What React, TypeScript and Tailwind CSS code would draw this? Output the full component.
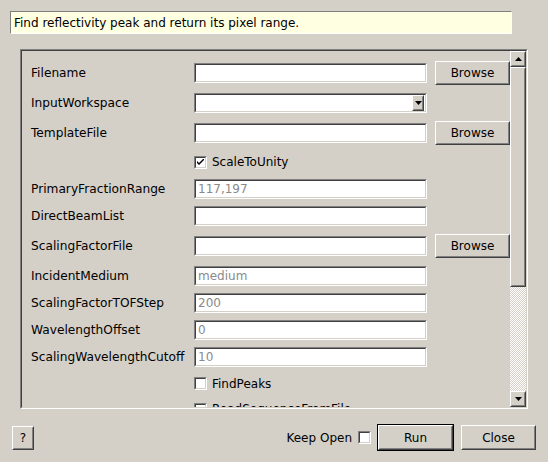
import React from "react";

const sunkenOuter =
  "border border-t-[#808080] border-l-[#808080] border-b-white border-r-white";
const sunkenInner =
  "border border-t-[#404040] border-l-[#404040] border-b-[#d4d0c8] border-r-[#d4d0c8]";
const raisedOuter =
  "border border-t-white border-l-white border-b-[#404040] border-r-[#404040]";
const raisedInner =
  "border border-t-[#d4d0c8] border-l-[#d4d0c8] border-b-[#808080] border-r-[#808080]";

function Input({ value }: { value?: string }) {
  return (
    <div className={`w-[233px] h-[20px] ${sunkenOuter}`}>
      <div
        className={`h-full ${sunkenInner} bg-white flex items-center pl-[2px] text-[#8a8a8a] leading-none`}
      >
        {value}
      </div>
    </div>
  );
}

function Tri({ down }: { down?: boolean }) {
  return (
    <svg width="7" height="4" viewBox="0 0 7 4">
      {down ? (
        <polygon points="0,0 7,0 3.5,4" fill="#000" />
      ) : (
        <polygon points="0,4 7,4 3.5,0" fill="#000" />
      )}
    </svg>
  );
}

function Combo() {
  return (
    <div className={`w-[233px] h-[20px] ${sunkenOuter}`}>
      <div className={`h-full ${sunkenInner} bg-white flex items-center justify-end`}>
        <div className={`w-[12px] h-[16px] mr-[1px] ${raisedOuter} bg-[#d4d0c8]`}>
          <div className={`h-full ${raisedInner} flex items-center justify-center`}>
            <Tri down />
          </div>
        </div>
      </div>
    </div>
  );
}

function Button({
  label,
  w,
  h,
  isDefault,
}: {
  label: string;
  w: string;
  h: string;
  isDefault?: boolean;
}) {
  const inner = (
    <div className={`h-full w-full ${raisedOuter}`}>
      <div className={`h-full w-full ${raisedInner} flex items-center justify-center`}>
        {label}
      </div>
    </div>
  );
  return (
    <div className={`${w} ${h} ${isDefault ? "border border-black" : ""} bg-[#d4d0c8] shrink-0`}>
      {inner}
    </div>
  );
}

function CheckBox({ checked }: { checked?: boolean }) {
  return (
    <div className={`w-[13px] h-[13px] ${sunkenOuter} shrink-0`}>
      <div className={`h-full ${sunkenInner} bg-white flex items-center justify-center`}>
        {checked && (
          <svg width="7" height="7" viewBox="0 0 7 7">
            <path d="M0 2 L0 4 L2 6 L7 1 L7 -1 L2 4 Z" fill="#000" />
          </svg>
        )}
      </div>
    </div>
  );
}

function Row({
  h,
  label,
  children,
}: {
  h: string;
  label?: string;
  children: React.ReactNode;
}) {
  return (
    <div className={`flex items-center ${h} shrink-0`}>
      <div className="w-[163px] shrink-0 whitespace-nowrap text-[12.2px]">{label}</div>
      {children}
    </div>
  );
}

export default function App() {
  return (
    <div
      className="w-[548px] h-[462px] bg-[#d4d0c8] overflow-hidden flex flex-col text-[12px] text-black"
      style={{ fontFamily: '"DejaVu Sans", Verdana, sans-serif' }}
    >
      {/* description */}
      <div
        className="mt-[11px] ml-[10px] w-[502px] h-[23px] bg-[#ffffe1] border border-t-[#808080] border-l-[#808080] border-b-white border-r-white flex items-center pl-[3px] whitespace-nowrap"
      >
        Find reflectivity peak and return its pixel range.
      </div>

      {/* scroll area */}
      <div className={`mt-[15px] ml-[20px] w-[508px] h-[360px] ${sunkenOuter}`}>
        <div className={`h-full ${sunkenInner} flex`}>
          <div className="w-[488px] h-full overflow-hidden pl-[9px] pt-[7px] flex flex-col">
            <Row h="h-[30px]" label="Filename">
              <Input />
              <div className="ml-[8px]">
                <Button label="Browse" w="w-[75px]" h="h-[24px]" />
              </div>
            </Row>
            <Row h="h-[30px]" label="InputWorkspace">
              <Combo />
            </Row>
            <Row h="h-[30px]" label="TemplateFile">
              <Input />
              <div className="ml-[8px]">
                <Button label="Browse" w="w-[75px]" h="h-[24px]" />
              </div>
            </Row>
            <Row h="h-[28px]">
              <CheckBox checked />
              <span className="ml-[5px]">ScaleToUnity</span>
            </Row>
            <Row h="h-[26px]" label="PrimaryFractionRange">
              <Input value="117,197" />
            </Row>
            <Row h="h-[28px]" label="DirectBeamList">
              <Input />
            </Row>
            <Row h="h-[32px]" label="ScalingFactorFile">
              <Input />
              <div className="ml-[8px]">
                <Button label="Browse" w="w-[75px]" h="h-[24px]" />
              </div>
            </Row>
            <Row h="h-[28px]" label="IncidentMedium">
              <Input value="medium" />
            </Row>
            <Row h="h-[26px]" label="ScalingFactorTOFStep">
              <Input value="200" />
            </Row>
            <Row h="h-[28px]" label="WavelengthOffset">
              <Input value="0" />
            </Row>
            <Row h="h-[26px]" label="ScalingWavelengthCutoff">
              <Input value="10" />
            </Row>
            <Row h="h-[27px]">
              <CheckBox />
              <span className="ml-[5px]">FindPeaks</span>
            </Row>
            <Row h="h-[24px]">
              <CheckBox />
              <span className="ml-[5px]">ReadSequenceFromFile</span>
            </Row>
          </div>
          {/* scrollbar */}
          <div className="w-[16px] h-full flex flex-col shrink-0">
            <div className={`h-[16px] ${raisedOuter} bg-[#d4d0c8] shrink-0`}>
              <div className={`h-full ${raisedInner} flex items-center justify-center`}>
                <Tri />
              </div>
            </div>
            <div className={`h-[220px] ${raisedOuter} bg-[#d4d0c8] shrink-0`}>
              <div className={`h-full ${raisedInner}`} />
            </div>
            <div className="flex-1 bg-[image:repeating-conic-gradient(#ffffff_0_25%,#d4d0c8_0_50%)] bg-[length:2px_2px]" />
            <div className={`h-[16px] ${raisedOuter} bg-[#d4d0c8] shrink-0`}>
              <div className={`h-full ${raisedInner} flex items-center justify-center`}>
                <Tri down />
              </div>
            </div>
          </div>
        </div>
      </div>

      {/* bottom */}
      <div className="mt-[15px] h-[27px] px-[12px] flex items-center justify-between">
        <Button label="?" w="w-[22px]" h="h-[24px]" />
        <div className="flex items-center">
          <span className="whitespace-nowrap">Keep Open</span>
          <div className="ml-[6px]">
            <CheckBox />
          </div>
          <div className="ml-[6px]">
            <Button label="Run" w="w-[77px]" h="h-[27px]" isDefault />
          </div>
          <div className="ml-[7px]">
            <Button label="Close" w="w-[75px]" h="h-[25px]" />
          </div>
        </div>
      </div>
    </div>
  );
}
